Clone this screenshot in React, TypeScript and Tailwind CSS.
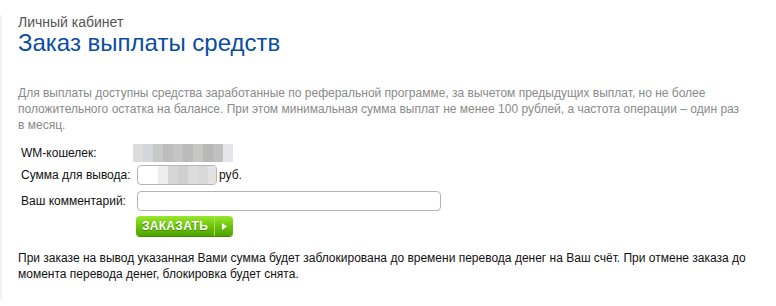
import React from 'react';

const Blur: React.FC<{ cells: string[]; h: string }> = ({ cells, h }) => (
  <div className={`flex ${h}`}>
    {cells.map((c, i) => (
      <div key={i} className="w-[10px] h-full" style={{ background: c }} />
    ))}
  </div>
);

const wallet = ['#dcdcdc', '#d2d6da', '#c8c8c8', '#bdbdbd', '#c4c4c4', '#bababa', '#c6c6c2', '#b8b8b8', '#c0c0be', '#e6e6ea'];
const sum = ['#eeeeee', '#d6d6d6', '#d0d0d0', '#dcdcdc', '#d8d8d8', '#e2e2e2'];

const Row: React.FC<{ label: string; className?: string; children: React.ReactNode }> = ({ label, className, children }) => (
  <div className={`flex items-center ${className ?? ''}`}>
    <span className="w-[116px] shrink-0">{label}</span>
    {children}
  </div>
);

export default function App() {
  return (
    <div className="w-[776px] h-[306px] bg-white flex font-['Liberation_Sans',Arial,sans-serif]">
      <div className="w-[2px] mt-[15px] mb-[6px] bg-[#f2f2f2]" />
      <div className="flex-1 pl-[16px] pr-[10px] pt-[14px]">
        <div className="text-[14px] leading-[16px] text-[#555]">Личный кабинет</div>
        <h1 className="text-[24px] leading-[26px] text-[#0b4d9f]">Заказ выплаты средств</h1>

        <p className="mt-[29px] text-[12px] leading-[16px] text-[#8a8a8a] pr-[20px]">
          Для выплаты доступны средства заработанные по реферальной программе, за вычетом предыдущих выплат, но не более
          положительного остатка на балансе. При этом минимальная сумма выплат не менее 100 рублей, а частота операции – один раз
          в месяц.
        </p>

        <div className="mt-[11px] flex flex-col pl-[3px] text-[12px] text-[#111]">
          <Row label="WM-кошелек:" className="h-[18px]">
            <div className="-ml-[4px]"><Blur cells={wallet} h="h-[18px]" /></div>
          </Row>

          <Row label="Сумма для вывода:" className="h-[20px] mt-[3px]">
            <div className="w-[80px] h-[20px] rounded-[4px] border border-[#b5b5b5] overflow-hidden flex items-center pl-[20px]">
              <Blur cells={sum} h="h-[18px]" />
            </div>
            <span className="ml-[2px]">руб.</span>
          </Row>

          <Row label="Ваш комментарий:" className="h-[20px] mt-[6px]">
            <input className="w-[304px] h-[20px] rounded-[4px] border border-[#b5b5b5] outline-none" />
          </Row>

          <div className="h-[20px] mt-[5px] pl-[115px]">
            <button className="w-[97px] h-[20px] rounded-[4px] flex items-stretch text-white font-bold text-[12px] bg-gradient-to-b from-[#9be82c] via-[#6dc40c] to-[#4ea300] shadow-[0_1px_0_#3d8a00]">
              <span className="flex-1 flex items-center justify-center tracking-[0.3px] [text-shadow:0_1px_0_#3f8a00]">ЗАКАЗАТЬ</span>
              <span className="w-px bg-[#a6e05a]" />
              <span className="w-[18px] flex items-center justify-center">
                <svg width="5" height="7" viewBox="0 0 5 7"><path d="M0 0 L5 3.5 L0 7 Z" fill="#fff" /></svg>
              </span>
            </button>
          </div>
        </div>

        <p className="mt-[14px] text-[12px] leading-[16px] text-[#111]">
          При заказе на вывод указанная Вами сумма будет заблокирована до времени перевода денег на Ваш счёт. При отмене заказа до
          момента перевода денег, блокировка будет снята.
        </p>
      </div>
    </div>
  );
}
